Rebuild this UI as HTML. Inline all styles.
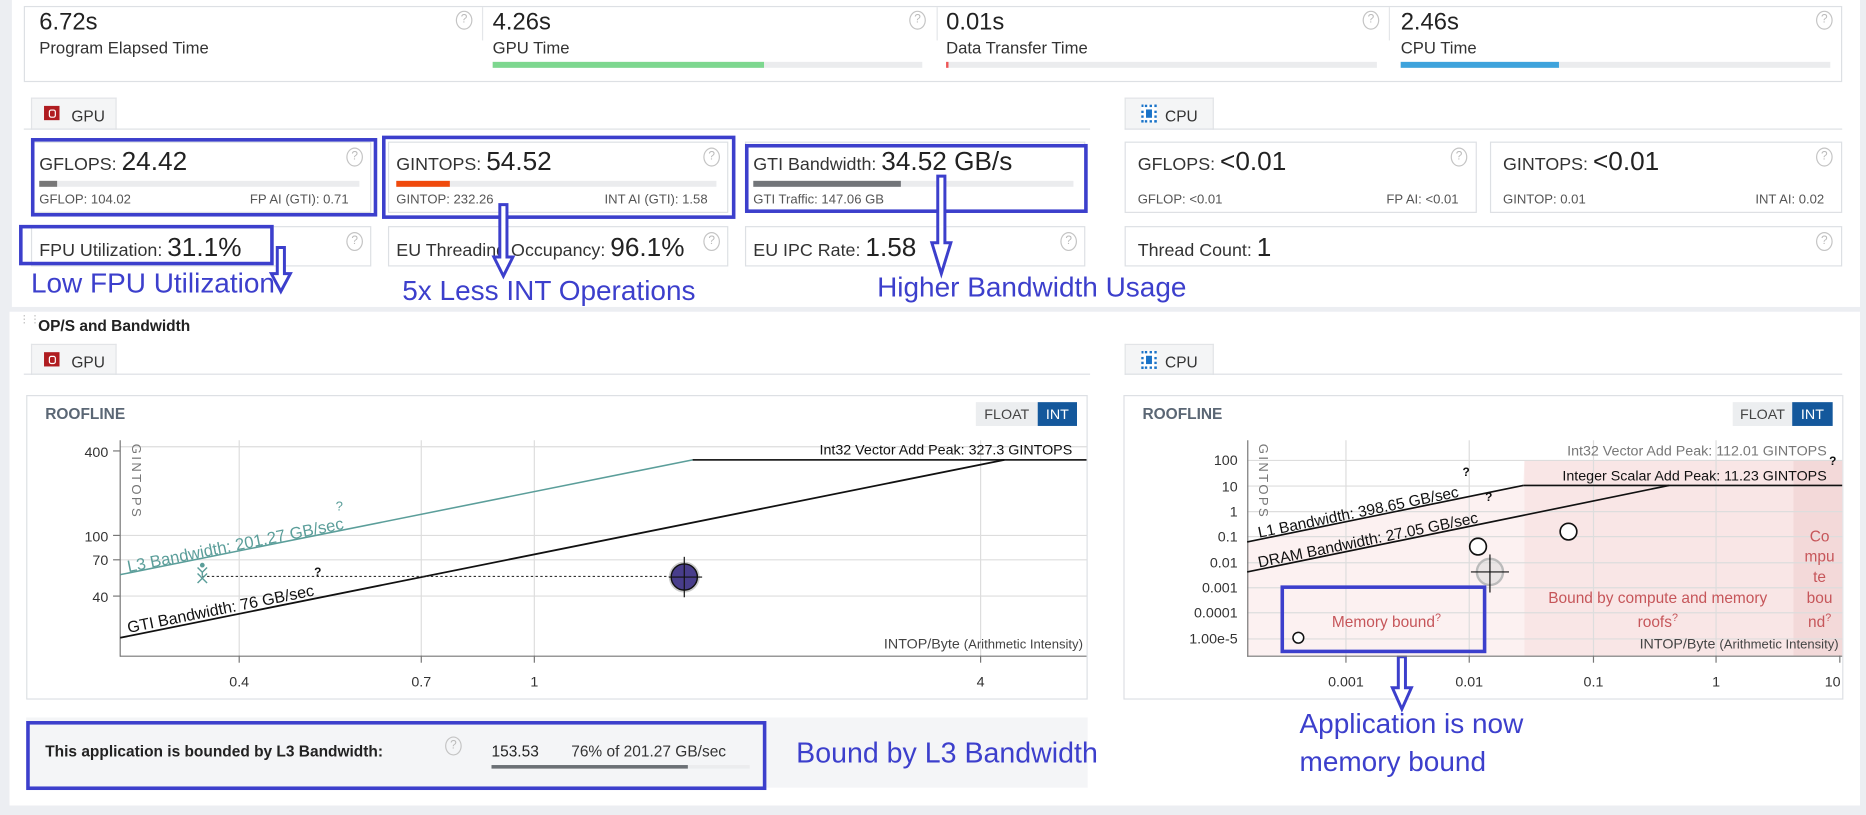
<!DOCTYPE html>
<html><head><meta charset="utf-8"><style>
html,body{margin:0;padding:0;width:1866px;height:815px;overflow:hidden;background:#eceef2;font-family:"Liberation Sans",Arial,sans-serif;color:#222}
#w{position:absolute;left:0;top:0;width:1568px;height:685px;transform:scale(1.19005,1.1898);transform-origin:0 0}
.a{position:absolute}
.panel{position:absolute;background:#fff}
.card{position:absolute;border:1px solid #dde0e4;background:#fff;box-sizing:border-box}
.help{position:absolute;width:12px;height:14px;border:1px solid #c4c4c4;border-radius:50%;color:#bbb;font-size:10px;line-height:14px;text-align:center}
.big{font-size:20px;color:#222}
.lbl{font-size:14px;color:#333}
.bar{position:absolute;height:5px;background:#ebecee}
.bar i{position:absolute;left:0;top:0;height:5px}
.sm{font-size:11px;color:#555;position:absolute}
.tab{position:absolute;background:#f4f5f6;border:1px solid #e2e4e7;border-bottom:none;box-sizing:border-box;font-size:13px;color:#333;padding:7px 0 0 33px}
.line{position:absolute;height:1px;background:#dde0e4}
.ann{position:absolute;color:#3c3fcc;font-size:23.5px;white-space:nowrap}
.bx{position:absolute;border:3px solid #3c3fcc;box-sizing:border-box}
.v{font-size:22px;color:#222}
.k{font-size:15px;color:#333}
</style></head><body><div id="w">
<div class="panel" style="left:10px;top:0;width:1553px;height:258px"></div>
<div class="panel" style="left:8px;top:262px;width:1555px;height:415px"></div>

<div class="card" style="left:20px;top:5px;width:1528px;height:64px"></div>
<div class="a" style="left:405px;top:6px;width:1px;height:28px;background:#e4e6e9"></div>
<div class="a" style="left:787px;top:6px;width:1px;height:28px;background:#e4e6e9"></div>
<div class="a" style="left:1167px;top:6px;width:1px;height:28px;background:#e4e6e9"></div>
<div class="a big" style="left:33px;top:8px">6.72s</div><div class="a lbl" style="left:33px;top:32px">Program Elapsed Time</div>
<div class="a big" style="left:414px;top:8px">4.26s</div><div class="a lbl" style="left:414px;top:32px">GPU Time</div>
<div class="a big" style="left:795px;top:8px">0.01s</div><div class="a lbl" style="left:795px;top:32px">Data Transfer Time</div>
<div class="a big" style="left:1177px;top:8px">2.46s</div><div class="a lbl" style="left:1177px;top:32px">CPU Time</div>
<div class="bar" style="left:414px;top:52px;width:361px"><i style="width:228px;background:#7dd78f"></i></div>
<div class="bar" style="left:795px;top:52px;width:362px"><i style="width:2px;background:#e55"></i></div>
<div class="bar" style="left:1177px;top:52px;width:361px"><i style="width:133px;background:#3ea3dc"></i></div>
<div class="help" style="left:383px;top:9px">?</div><div class="help" style="left:764px;top:9px">?</div><div class="help" style="left:1145px;top:9px">?</div><div class="help" style="left:1526px;top:9px">?</div>

<div class="tab" style="left:26px;top:82px;width:72px;height:27px">GPU</div>
<div class="a" style="left:37px;top:89px;width:13px;height:12px;background:#b01c20"><div style="position:absolute;left:4px;top:3px;width:4px;height:5px;border:1px solid #fff;border-radius:2px"></div></div>
<div class="line" style="left:20px;top:108px;width:896px"></div>
<div class="tab" style="left:945px;top:82px;width:75px;height:27px">CPU</div>
<div class="a" style="left:959px;top:88px;width:9px;height:11px;border:2px dotted #1a73c8;background:#fff"><div style="position:absolute;left:2px;top:2px;width:5px;height:7px;background:#1a73c8"></div></div>
<div class="line" style="left:945px;top:108px;width:603px"></div>

<div class="card" style="left:26px;top:119px;width:286px;height:60px"></div>
<div class="card" style="left:326px;top:119px;width:286px;height:60px"></div>
<div class="card" style="left:626px;top:119px;width:286px;height:60px"></div>
<div class="a" style="left:33px;top:123px"><span class="k">GFLOPS: </span><span class="v">24.42</span></div>
<div class="a" style="left:333px;top:123px"><span class="k">GINTOPS: </span><span class="v">54.52</span></div>
<div class="a" style="left:633px;top:123px"><span class="k">GTI Bandwidth: </span><span class="v">34.52 GB/s</span></div>
<div class="bar" style="left:33px;top:152px;width:269px"><i style="width:15px;background:#777"></i></div>
<div class="bar" style="left:333px;top:152px;width:269px"><i style="width:45px;background:#f04a0c"></i></div>
<div class="bar" style="left:633px;top:152px;width:269px"><i style="width:124px;background:#727579"></i></div>
<div class="sm" style="left:33px;top:162px">GFLOP: 104.02</div><div class="sm" style="left:210px;top:162px">FP AI (GTI): 0.71</div>
<div class="sm" style="left:333px;top:162px">GINTOP: 232.26</div><div class="sm" style="left:508px;top:162px">INT AI (GTI): 1.58</div>
<div class="sm" style="left:633px;top:162px">GTI Traffic: 147.06 GB</div>
<div class="help" style="left:291px;top:124px">?</div><div class="help" style="left:591px;top:124px">?</div>

<div class="card" style="left:26px;top:190px;width:286px;height:34px"></div>
<div class="card" style="left:326px;top:190px;width:286px;height:34px"></div>
<div class="card" style="left:626px;top:190px;width:286px;height:34px"></div>
<div class="a" style="left:33px;top:195px"><span class="k">FPU Utilization: </span><span class="v">31.1%</span></div>
<div class="a" style="left:333px;top:195px"><span class="k">EU Threading Occupancy: </span><span class="v">96.1%</span></div>
<div class="a" style="left:633px;top:195px"><span class="k">EU IPC Rate: </span><span class="v">1.58</span></div>
<div class="help" style="left:291px;top:195px">?</div><div class="help" style="left:591px;top:195px">?</div><div class="help" style="left:891px;top:195px">?</div>

<div class="card" style="left:945px;top:119px;width:296px;height:60px"></div>
<div class="card" style="left:1252px;top:119px;width:296px;height:60px"></div>
<div class="a" style="left:956px;top:123px"><span class="k">GFLOPS: </span><span class="v">&lt;0.01</span></div>
<div class="a" style="left:1263px;top:123px"><span class="k">GINTOPS: </span><span class="v">&lt;0.01</span></div>
<div class="sm" style="left:956px;top:162px">GFLOP: &lt;0.01</div><div class="sm" style="left:1165px;top:162px">FP AI: &lt;0.01</div>
<div class="sm" style="left:1263px;top:162px">GINTOP: 0.01</div><div class="sm" style="left:1475px;top:162px">INT AI: 0.02</div>
<div class="help" style="left:1219px;top:124px">?</div><div class="help" style="left:1526px;top:124px">?</div>
<div class="card" style="left:945px;top:190px;width:603px;height:34px"></div>
<div class="a" style="left:956px;top:195px"><span class="k">Thread Count: </span><span class="v">1</span></div>
<div class="help" style="left:1526px;top:195px">?</div>

<div class="bx" style="left:26px;top:116px;width:291px;height:66px"></div>
<div class="bx" style="left:321px;top:114px;width:297px;height:70px"></div>
<div class="bx" style="left:626px;top:121px;width:288px;height:58px"></div>
<div class="bx" style="left:16px;top:189px;width:214px;height:34px"></div>
<div class="ann" style="left:26px;top:225px">Low FPU Utilization</div>
<div class="ann" style="left:338px;top:231px">5x Less INT Operations</div>
<div class="ann" style="left:737px;top:228px">Higher Bandwidth Usage</div>

<div class="a" style="left:16px;top:266px;color:#bbb;font-size:9px;line-height:5px">⋮⋮</div>
<div class="a" style="left:32px;top:266px;font-size:13px;font-weight:bold;color:#222">OP/S and Bandwidth</div>
<div class="tab" style="left:26px;top:289px;width:72px;height:26px">GPU</div>
<div class="a" style="left:37px;top:296px;width:13px;height:12px;background:#b01c20"><div style="position:absolute;left:4px;top:3px;width:4px;height:5px;border:1px solid #fff;border-radius:2px"></div></div>
<div class="line" style="left:20px;top:314px;width:896px"></div>
<div class="tab" style="left:945px;top:289px;width:75px;height:26px">CPU</div>
<div class="a" style="left:959px;top:295px;width:9px;height:11px;border:2px dotted #1a73c8;background:#fff"><div style="position:absolute;left:2px;top:2px;width:5px;height:7px;background:#1a73c8"></div></div>
<div class="line" style="left:945px;top:314px;width:603px"></div>

<div class="card" style="left:22px;top:332px;width:892px;height:256px"></div>
<div class="card" style="left:944px;top:332px;width:605px;height:256px"></div>
<div class="a" style="left:38px;top:340px;font-size:13px;font-weight:bold;color:#5b6775">ROOFLINE</div>
<div class="a" style="left:960px;top:340px;font-size:13px;font-weight:bold;color:#5b6775">ROOFLINE</div>
<div class="a" style="left:820px;top:338px;width:52px;height:20px;background:#eceef0;font-size:12px;color:#444;text-align:center;line-height:20px">FLOAT</div>
<div class="a" style="left:872px;top:338px;width:33px;height:20px;background:#14589c;font-size:12px;color:#fff;text-align:center;line-height:20px">INT</div>
<div class="a" style="left:1456px;top:338px;width:50px;height:20px;background:#eceef0;font-size:12px;color:#444;text-align:center;line-height:20px">FLOAT</div>
<div class="a" style="left:1506px;top:338px;width:34px;height:20px;background:#14589c;font-size:12px;color:#fff;text-align:center;line-height:20px">INT</div>

<div class="a" style="left:22px;top:603px;width:892px;height:59px;background:#f4f5f7"></div>
<div class="bx" style="left:22px;top:606px;width:622px;height:58px"></div>
<div class="a" style="left:38px;top:624px;font-size:13px;font-weight:bold;color:#222">This application is bounded by L3 Bandwidth:</div>
<div class="help" style="left:374px;top:619px">?</div>
<div class="a" style="left:413px;top:624px;font-size:13px;color:#222">153.53</div>
<div class="a" style="left:480px;top:624px;font-size:13px;color:#333">76% of 201.27 GB/sec</div>
<div class="bar" style="left:413px;top:643px;width:217px;height:3px"><i style="width:165px;height:3px;background:#6b7075"></i></div>
<div class="ann" style="left:669px;top:620px;font-size:24px">Bound by L3 Bandwidth</div>

<svg class="a" style="left:0;top:0" width="1568" height="685" viewBox="0 0 1568 685" font-family="Liberation Sans, Arial, sans-serif">
<g fill="#fff" stroke="#3c3fcc" stroke-width="2.5">
<path d="M233 208h6v22h5l-8 15l-8-15h5z"/>
<path d="M420 172h6v44h5l-8 16l-8-16h5z"/>
<path d="M788 148h6v56h5l-8 26l-8-26h5z"/>
<path d="M1175 552h6v26h5l-8 18l-8-18h5z"/>
</g>
<g stroke="#ddd" stroke-width="1">
<line x1="101" y1="375.5" x2="913" y2="375.5"/><line x1="101" y1="450" x2="913" y2="450"/><line x1="101" y1="470.5" x2="913" y2="470.5"/><line x1="101" y1="501" x2="913" y2="501"/>
<line x1="201" y1="370" x2="201" y2="551"/><line x1="354" y1="370" x2="354" y2="551"/><line x1="449" y1="370" x2="449" y2="551"/><line x1="824" y1="370" x2="824" y2="551"/>
</g>
<g stroke="#777" stroke-width="1"><line x1="101" y1="370" x2="101" y2="552"/><line x1="101" y1="551.5" x2="913" y2="551.5"/>
<line x1="201" y1="551" x2="201" y2="557"/><line x1="354" y1="551" x2="354" y2="557"/><line x1="449" y1="551" x2="449" y2="557"/><line x1="824" y1="551" x2="824" y2="557"/>
<line x1="95" y1="379" x2="101" y2="379"/><line x1="95" y1="450" x2="101" y2="450"/><line x1="95" y1="470.5" x2="101" y2="470.5"/><line x1="95" y1="501" x2="101" y2="501"/></g>
<g font-size="12" fill="#333" text-anchor="end"><text x="91" y="384">400</text><text x="91" y="455">100</text><text x="91" y="475">70</text><text x="91" y="506">40</text></g>
<g font-size="12" fill="#333" text-anchor="middle"><text x="201" y="577">0.4</text><text x="354" y="577">0.7</text><text x="449" y="577">1</text><text x="824" y="577">4</text></g>
<text transform="translate(111,373) rotate(90)" font-size="11" fill="#777" letter-spacing="2">GINTOPS</text>
<line x1="101" y1="483" x2="582" y2="386.5" stroke="#5b9e9a" stroke-width="1.3"/>
<line x1="582" y1="386.5" x2="913" y2="386.5" stroke="#222" stroke-width="1.5"/>
<line x1="101" y1="536" x2="844" y2="386.5" stroke="#111" stroke-width="1.5"/>
<text x="901" y="382" font-size="12" fill="#111" text-anchor="end">Int32 Vector Add Peak: 327.3 GINTOPS</text>
<text transform="translate(108,481) rotate(-11.4)" font-size="14" fill="#5b9e9a">L3 Bandwidth: 201.27 GB/sec</text>
<text x="282" y="429" font-size="11" fill="#5b9e9a">?</text>
<text transform="translate(108,532) rotate(-11.4)" font-size="13.5" fill="#111">GTI Bandwidth: 76 GB/sec</text>
<line x1="170" y1="484.5" x2="565" y2="484.5" stroke="#333" stroke-dasharray="2,2"/>
<text x="264" y="484" font-size="10" font-weight="bold" fill="#111">?</text>
<path d="M166 477l4 4l4-4M170 481v3M166 490l8-8M166 482l8 8" stroke="#5b9e9a" stroke-width="1.2" fill="none"/>
<circle cx="170" cy="475" r="2" fill="#5b9e9a"/>
<circle cx="575" cy="485" r="13" fill="#ccc"/>
<circle cx="575" cy="485" r="11" fill="#483d8b" stroke="#111" stroke-width="1.2"/>
<line x1="575" y1="468" x2="575" y2="502" stroke="#111"/><line x1="562" y1="485" x2="590" y2="485" stroke="#111"/>
<text x="910" y="545" font-size="12" fill="#444" text-anchor="end">INTOP/Byte <tspan font-size="11">(Arithmetic Intensity)</tspan></text>

<polygon points="1048,455.5 1280,408 1281,387 1548,387 1548,551 1048,551" fill="#fcf1f1"/>
<rect x="1281" y="387" width="226" height="164" fill="#f9e6e6"/>
<rect x="1507" y="387" width="41" height="164" fill="#f3d9d9"/>
<g stroke="#ddd"><line x1="1048" y1="387" x2="1548" y2="387"/><line x1="1048" y1="408.5" x2="1548" y2="408.5"/><line x1="1048" y1="430" x2="1548" y2="430"/><line x1="1048" y1="451" x2="1548" y2="451"/><line x1="1048" y1="473" x2="1548" y2="473"/><line x1="1048" y1="494" x2="1548" y2="494"/><line x1="1048" y1="515" x2="1548" y2="515"/><line x1="1048" y1="537" x2="1548" y2="537"/>
<line x1="1131" y1="370" x2="1131" y2="551"/><line x1="1234.6" y1="370" x2="1234.6" y2="551"/><line x1="1339" y1="370" x2="1339" y2="551"/><line x1="1442" y1="370" x2="1442" y2="551"/></g>
<g stroke="#777"><line x1="1048.5" y1="370" x2="1048.5" y2="552"/><line x1="1048" y1="551.5" x2="1548" y2="551.5"/>
<line x1="1131" y1="551" x2="1131" y2="557"/><line x1="1234.6" y1="551" x2="1234.6" y2="557"/><line x1="1339" y1="551" x2="1339" y2="557"/><line x1="1442" y1="551" x2="1442" y2="557"/><line x1="1546" y1="551" x2="1546" y2="557"/></g>
<g font-size="12" fill="#333" text-anchor="end"><text x="1040" y="391">100</text><text x="1040" y="413">10</text><text x="1040" y="434">1</text><text x="1040" y="455">0.1</text><text x="1040" y="477">0.01</text><text x="1040" y="498">0.001</text><text x="1040" y="519">0.0001</text><text x="1040" y="541">1.00e-5</text></g>
<g font-size="12" fill="#333" text-anchor="middle"><text x="1131" y="577">0.001</text><text x="1234.6" y="577">0.01</text><text x="1339" y="577">0.1</text><text x="1442" y="577">1</text><text x="1540" y="577">10</text></g>
<text transform="translate(1058,373) rotate(90)" font-size="11" fill="#777" letter-spacing="2">GINTOPS</text>
<line x1="1048" y1="455.5" x2="1280" y2="408" stroke="#111" stroke-width="1.4"/>
<line x1="1280" y1="408" x2="1548" y2="408" stroke="#111" stroke-width="1.4"/>
<line x1="1048" y1="480.7" x2="1402.6" y2="408" stroke="#111" stroke-width="1.4"/>
<text x="1535" y="383" font-size="12" fill="#777" text-anchor="end">Int32 Vector Add Peak: 112.01 GINTOPS</text>
<text x="1535" y="404" font-size="12" fill="#111" text-anchor="end">Integer Scalar Add Peak: 11.23 GINTOPS</text>
<text x="1537" y="391" font-size="10" font-weight="bold" fill="#111">?</text>
<text transform="translate(1058,452) rotate(-11.6)" font-size="13" fill="#111">L1 Bandwidth: 398.65 GB/sec</text>
<text transform="translate(1058,477) rotate(-11.6)" font-size="13" fill="#111">DRAM Bandwidth: 27.05 GB/sec</text>
<text x="1229" y="400" font-size="10" font-weight="bold" fill="#111">?</text>
<text x="1248" y="421" font-size="10" font-weight="bold" fill="#111">?</text>
<circle cx="1242" cy="459.4" r="7" fill="#fff" stroke="#111" stroke-width="1.4"/>
<circle cx="1318" cy="446.8" r="7" fill="#fff" stroke="#111" stroke-width="1.4"/>
<circle cx="1091" cy="536" r="4.5" fill="#fff" stroke="#111" stroke-width="1.3"/>
<circle cx="1252" cy="480.7" r="11" fill="#ddd" fill-opacity="0.6" stroke="#bbb" stroke-width="2"/>
<line x1="1252" y1="466" x2="1252" y2="498" stroke="#111"/><line x1="1236" y1="480.7" x2="1268" y2="480.7" stroke="#111"/>
<g fill="#c6565a" font-size="13" text-anchor="middle">
<text x="1165" y="527">Memory bound<tspan font-size="9" dy="-5">?</tspan></text>
<text x="1393" y="507">Bound by compute and memory</text>
<text x="1393" y="527">roofs<tspan font-size="9" dy="-5">?</tspan></text>
<text x="1529" y="455">Co</text><text x="1529" y="472">mpu</text><text x="1529" y="489">te</text><text x="1529" y="507">bou</text><text x="1529" y="527">nd<tspan font-size="9" dy="-5">?</tspan></text>
</g>
<text x="1545" y="545" font-size="12" fill="#444" text-anchor="end">INTOP/Byte <tspan font-size="11">(Arithmetic Intensity)</tspan></text>
<rect x="1077.5" y="493.5" width="170" height="54" fill="none" stroke="#3c3fcc" stroke-width="3"/>
<text x="1092" y="616" font-size="23.5" fill="#3c3fcc">Application is now</text>
<text x="1092" y="648" font-size="23.5" fill="#3c3fcc">memory bound</text>
</svg>
</div></body></html>
